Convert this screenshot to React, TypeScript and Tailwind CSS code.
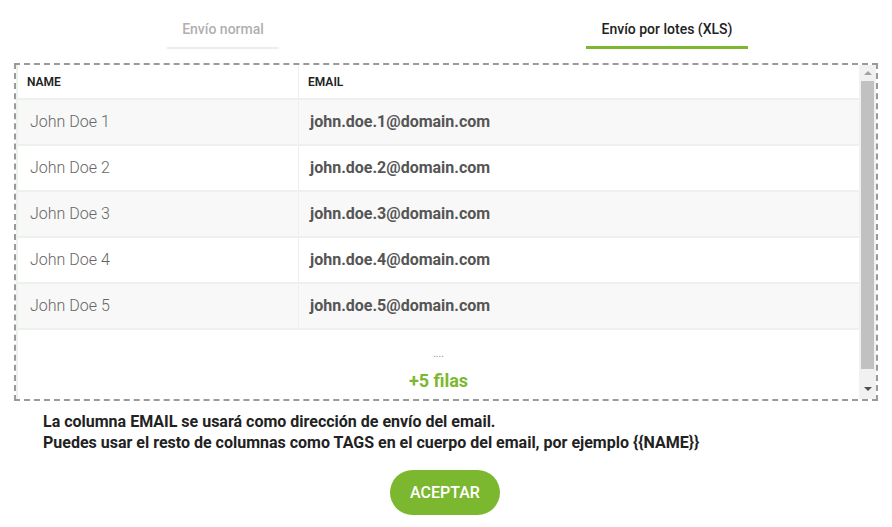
import React from 'react';

const rows = [1, 2, 3, 4, 5];

function ScrollBar() {
  return (
    <div className="flex w-[17px] flex-col items-center bg-[#f1f1f1]">
      <div className="flex h-[16px] w-full items-center justify-center">
        <div className="h-0 w-0 border-x-[4px] border-b-[4px] border-x-transparent border-b-[#a3a3a3]" />
      </div>
      <div className="h-[288px] w-[13px] bg-[#c1c1c1]" />
      <div className="flex-1" />
      <div className="flex h-[20px] w-full items-center justify-center">
        <div className="h-0 w-0 border-x-[4px] border-t-[4px] border-x-transparent border-t-[#505050]" />
      </div>
    </div>
  );
}

export default function App() {
  return (
    <div className="h-[527px] w-[892px] bg-white font-['Roboto',sans-serif]">
      <div className="flex pt-[19px]">
        <div className="flex w-1/2 justify-center">
          <div className="w-[112px] border-b-2 border-[#eaeeec] pb-[7px] text-center text-[14px] font-medium leading-[20px] text-[#b0b0b0]">
            Envío normal
          </div>
        </div>
        <div className="flex w-1/2 justify-center">
          <div className="ml-[-4px] w-[162px] border-b-[3px] border-[#7cb82f] pb-[7px] text-center text-[14px] font-medium leading-[20px] text-[#222]">
            Envío por lotes (XLS)
          </div>
        </div>
      </div>

      <div className="mx-[14px] mt-[14px] h-[338px] border-2 border-dashed border-[#9a9a9a]">
        <div className="flex h-full">
          <div className="flex-1 border-l-2 border-[#ecf1ec]">
            <div className="flex h-[35px] items-center border-b-2 border-[#ecf1ec] text-[12px] font-semibold text-[#222]">
              <div className="flex h-full w-[281px] items-center border-r border-[#ecf1ec] pl-[9px]">NAME</div>
              <div className="pl-[9px]">EMAIL</div>
            </div>
            {rows.map((n) => (
              <div
                key={n}
                className={`flex h-[46px] items-center border-b-2 border-[#ecf1ec] ${n % 2 === 1 ? 'bg-[#f8f8f8]' : 'bg-white'}`}
              >
                <div className="flex h-full w-[281px] items-center border-r border-[#ecf1ec] pl-[12px] text-[16px] font-light text-[#666]">
                  John Doe {n}
                </div>
                <div className="pl-[11px] text-[16px] font-bold text-[#555]">
                  john.doe.{n}@domain.com
                </div>
              </div>
            ))}
            <div className="flex flex-col items-center pt-[18px]">
              <div className="text-[10px] leading-[12px] text-[#888]">....</div>
              <div className="mt-[7px] text-[18px] font-bold text-[#7cb82f]">+5 filas</div>
            </div>
          </div>
          <ScrollBar />
        </div>
      </div>

      <div className="pl-[43px] pt-[10px] text-[16px] font-bold leading-[21px] text-[#222]">
        <div>La columna EMAIL se usará como dirección de envío del email.</div>
        <div>Puedes usar el resto de columnas como TAGS en el cuerpo del email, por ejemplo {'{{NAME}}'}</div>
      </div>

      <div className="mt-[17px] flex justify-center">
        <button className="ml-[-2px] h-[45px] w-[110px] rounded-full bg-[#7cb82f] text-[16px] font-medium text-white">
          ACEPTAR
        </button>
      </div>
    </div>
  );
}
